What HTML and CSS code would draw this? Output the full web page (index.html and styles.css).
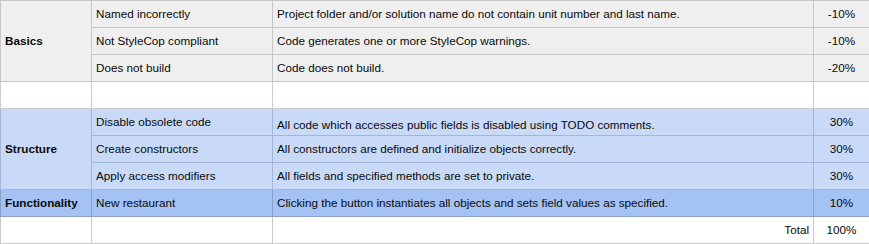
FILE: index.html
```html
<!DOCTYPE html>
<html lang="en">
<head>
<meta charset="utf-8">
<title>Rubric</title>
<link rel="stylesheet" href="styles.css">
</head>
<body>
<table class="rubric">
  <colgroup>
    <col class="c-cat">
    <col class="c-crit">
    <col class="c-desc">
    <col class="c-pct">
  </colgroup>
  <tbody>
    <tr class="gray">
      <td class="cat" rowspan="3">Basics</td>
      <td>Named incorrectly</td>
      <td>Project folder and/or solution name do not contain unit number and last name.</td>
      <td class="pct">-10%</td>
    </tr>
    <tr class="gray">
      <td>Not StyleCop compliant</td>
      <td>Code generates one or more StyleCop warnings.</td>
      <td class="pct">-10%</td>
    </tr>
    <tr class="gray">
      <td>Does not build</td>
      <td>Code does not build.</td>
      <td class="pct">-20%</td>
    </tr>
    <tr class="blank">
      <td></td><td></td><td></td><td></td>
    </tr>
    <tr class="blue">
      <td class="cat" rowspan="3">Structure</td>
      <td>Disable obsolete code</td>
      <td class="bottom">All code which accesses public fields is disabled using TODO comments.</td>
      <td class="pct">30%</td>
    </tr>
    <tr class="blue">
      <td>Create constructors</td>
      <td>All constructors are defined and initialize objects correctly.</td>
      <td class="pct">30%</td>
    </tr>
    <tr class="blue">
      <td>Apply access modifiers</td>
      <td>All fields and specified methods are set to private.</td>
      <td class="pct">30%</td>
    </tr>
    <tr class="dark">
      <td class="cat">Functionality</td>
      <td>New restaurant</td>
      <td>Clicking the button instantiates all objects and sets field values as specified.</td>
      <td class="pct">10%</td>
    </tr>
    <tr class="blank">
      <td></td>
      <td></td>
      <td class="total">Total</td>
      <td class="pct">100%</td>
    </tr>
  </tbody>
</table>
</body>
</html>
```

FILE: styles.css
```css
html, body {
  margin: 0;
  padding: 0;
  background: #ffffff;
}

.rubric {
  border-collapse: collapse;
  table-layout: fixed;
  width: 869px;
  font-family: "Liberation Sans", Arial, sans-serif;
  font-size: 11.7px;
  color: #0a0a0a;
}

.c-cat { width: 91px; }
.c-crit { width: 181px; }
.c-desc { width: 541px; }
.c-pct { width: 56px; }

.rubric td {
  height: 27px;
  padding: 0 4px 2px 4px;
  border: 1px solid #cccccc;
  vertical-align: middle;
  white-space: nowrap;
  overflow: hidden;
  box-sizing: border-box;
}

.gray td {
  background: #efefef;
  border-color: #c6c6c6;
}

.blank td {
  background: #ffffff;
}

.blue td {
  background: #c9daf8;
  border-color: #a3b6d9;
}

.dark td {
  background: #a4c2f4;
  border-color: #889fc7;
}

.rubric td.cat {
  font-weight: bold;
}

.rubric td.pct {
  text-align: center;
}

.rubric td.bottom {
  vertical-align: bottom;
  padding-bottom: 4px;
}

.rubric td.total {
  text-align: right;
}
```
